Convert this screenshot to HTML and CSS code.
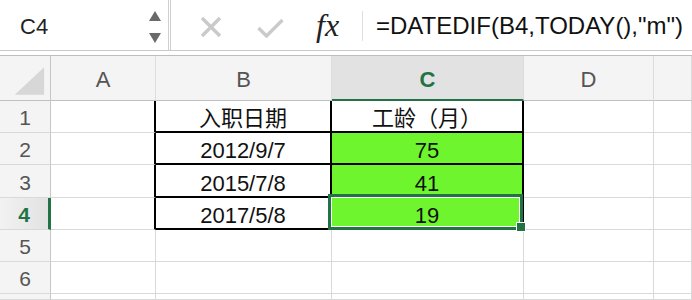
FILE: index.html
```html
<!DOCTYPE html>
<html lang="zh">
<head>
<meta charset="utf-8">
<link rel="stylesheet" href="styles.css">
</head>
<body>
<div class="topbar">
  <div class="namebox">
    <span class="ref">C4</span>
    <div class="spin">
      <svg width="12" height="10" viewBox="0 0 12 10"><polygon points="0,10 6,0 12,10" fill="#6a6a6a"/></svg>
      <svg width="12" height="10" viewBox="0 0 12 10"><polygon points="0,0 12,0 6,10" fill="#6a6a6a"/></svg>
    </div>
  </div>
  <div class="tools">
    <svg class="ic-x" width="22" height="22" viewBox="0 0 22 22"><path d="M2 2 L20 20 M20 2 L2 20" stroke="#cacaca" stroke-width="3.4" fill="none"/></svg>
    <svg class="ic-check" width="27" height="20" viewBox="0 0 27 20"><polyline points="1.5,10 9.5,18 25.5,2" stroke="#cacaca" stroke-width="3.4" fill="none"/></svg>
    <span class="fx">fx</span>
  </div>
  <div class="formula">=DATEDIF(B4,TODAY(),"m")</div>
</div>
<div class="strip"></div>
<div class="sheet">
  <div class="c corner"><svg width="51" height="44" viewBox="0 0 51 44"><polygon points="45,11 45,39 15,39" fill="#d7d7d7"/></svg></div>
  <div class="c ch">A</div>
  <div class="c ch">B</div>
  <div class="c ch active">C</div>
  <div class="c ch">D</div>
  <div class="c ch last"></div>

  <div class="c rh">1</div>
  <div class="c tl"></div>
  <div class="c tb">入职日期</div>
  <div class="c tb">工龄（月）</div>
  <div class="c"></div>
  <div class="c"></div>

  <div class="c rh">2</div>
  <div class="c tl"></div>
  <div class="c tb">2012/9/7</div>
  <div class="c tb fill">75</div>
  <div class="c"></div>
  <div class="c"></div>

  <div class="c rh">3</div>
  <div class="c tl"></div>
  <div class="c tb">2015/7/8</div>
  <div class="c tb fill">41</div>
  <div class="c"></div>
  <div class="c"></div>

  <div class="c rh active">4</div>
  <div class="c tl"></div>
  <div class="c tb">2017/5/8</div>
  <div class="c tb fill sel">19<div class="selbox"></div><div class="handle"></div></div>
  <div class="c"></div>
  <div class="c"></div>

  <div class="c rh">5</div>
  <div class="c"></div>
  <div class="c"></div>
  <div class="c"></div>
  <div class="c"></div>
  <div class="c"></div>

  <div class="c rh">6</div>
  <div class="c"></div>
  <div class="c"></div>
  <div class="c"></div>
  <div class="c"></div>
  <div class="c"></div>

  <div class="c rh"></div>
  <div class="c"></div>
  <div class="c"></div>
  <div class="c"></div>
  <div class="c"></div>
  <div class="c"></div>
</div>
</body>
</html>
```
FILE: styles.css
```css
html, body {
  margin: 0;
  padding: 0;
  background: #fff;
  font-family: "Liberation Sans", Arial, "Noto Sans CJK SC", sans-serif;
}
body {
  height: 300px;
  overflow: hidden;
}
.topbar {
  display: flex;
  align-items: center;
  height: 50px;
  border-bottom: 1px solid #c9c9c9;
  white-space: nowrap;
  overflow: hidden;
}
.namebox {
  box-sizing: border-box;
  width: 171px;
  flex: none;
  height: 100%;
  display: flex;
  align-items: center;
  padding-left: 20px;
  border-right: 3px double #cfcfcf;
}
.ref {
  flex: 1;
  font-size: 22px;
  color: #222;
  padding-top: 4px;
}
.spin {
  display: flex;
  flex-direction: column;
  gap: 12px;
  margin-right: 7px;
  padding-top: 4px;
}
.spin svg { display: block; }
.tools {
  box-sizing: border-box;
  width: 191px;
  flex: none;
  height: 100%;
  display: flex;
  align-items: center;
  padding-left: 29px;
}
.ic-x { margin-top: 3px; }
.ic-check { margin-left: 35px; margin-top: 5px; }
.fx {
  margin-left: 32px;
  font-family: "Liberation Serif", "Times New Roman", serif;
  font-style: italic;
  font-size: 32px;
  color: #222;
}
.formula {
  height: 30px;
  border-left: 1px solid #dedede;
  padding-left: 13px;
  font-size: 24px;
  line-height: 30px;
  color: #111;
  margin-top: 2px;
}
.strip {
  height: 4px;
  border-bottom: 1px solid #bdbdbd;
}
.sheet {
  display: grid;
  height: 244px;
  overflow: hidden;
  grid-template-columns: 51px 105px 176px 192px 130px 1fr;
  grid-template-rows: 45px 32px 32px 33px 32px 32px 32px 1fr;
}
.c {
  box-sizing: border-box;
  border-right: 1px solid #d9d9d9;
  border-bottom: 1px solid #d9d9d9;
  display: flex;
  justify-content: center;
  align-items: flex-end;
  font-size: 22px;
  line-height: 25px;
  color: #111;
}
.corner {
  background: #f4f4f4;
  border-right: 1px solid #c6c6c6;
  border-bottom: 1px solid #c0c0c0;
  align-items: stretch;
}
.corner svg { display: block; }
.ch {
  background: #f4f4f4;
  border-bottom: 1px solid #c0c0c0;
  border-right: 1px solid #dcdcdc;
  align-items: center;
  color: #555;
  padding-top: 3px;
}
.ch.active {
  background: #e2e2e2;
  color: #217346;
  font-weight: bold;
  border-bottom: 2px solid #217346;
  padding-top: 4px;
}
.rh {
  background: #f4f4f4;
  border-right: 1px solid #c6c6c6;
  color: #555;
  font-size: 21px;
  padding-bottom: 2px;
}
.rh.active {
  background: linear-gradient(to right, #f2f2f2, #e2e2e2);
  color: #217346;
  font-weight: bold;
  border-right: 3px solid #217346;
}
.tl { border-right: 2px solid #000; }
.tb {
  border-right: 2px solid #000;
  border-bottom: 2px solid #000;
}
.fill { background: #6ff52d; }
.sel { position: relative; }
.selbox {
  position: absolute;
  left: -4px;
  top: -4px;
  right: -1px;
  bottom: -2px;
  border: 3px solid #217346;
  box-shadow: inset 0 0 0 1px #fff;
}
.handle {
  position: absolute;
  right: -4px;
  bottom: -4px;
  width: 8px;
  height: 8px;
  background: #217346;
  border: 1px solid #fff;
}
```
